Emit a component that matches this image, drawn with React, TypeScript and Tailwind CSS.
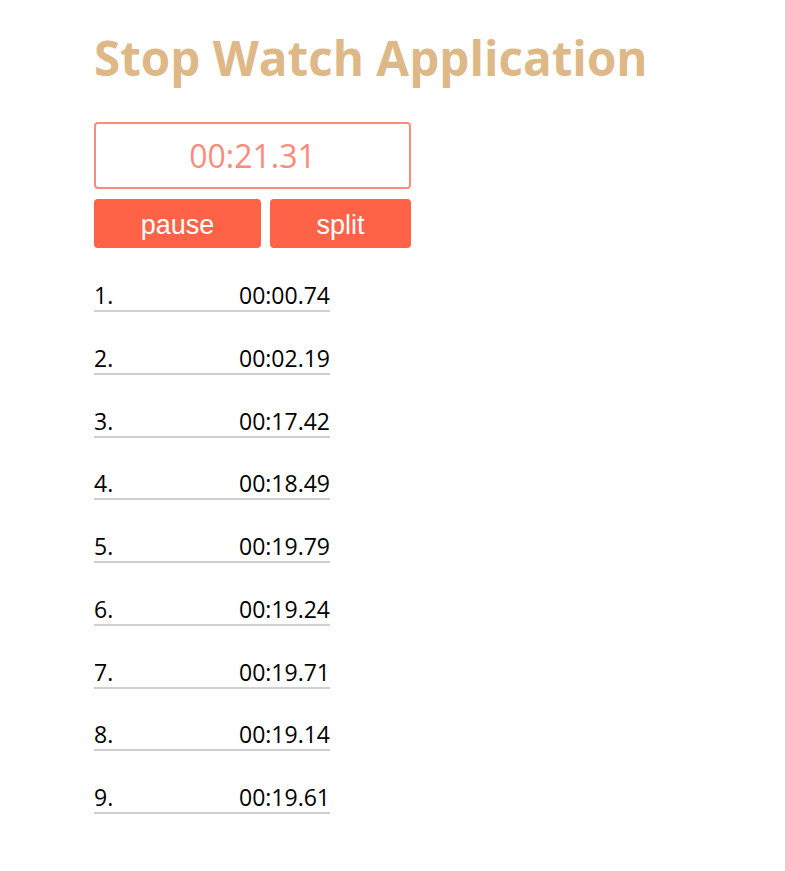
import React from "react";

const laps = ["00:00.74","00:02.19","00:17.42","00:18.49","00:19.79","00:19.24","00:19.71","00:19.14","00:19.61"];

export default function App() {
  return (
    <div className="min-h-screen bg-white pl-[94px] pt-[26px]" style={{ fontFamily: '"Open Sans", "Noto Sans", sans-serif' }}>
      <h1 className="text-[47.6px] font-bold leading-[64px] text-[#deb887]">Stop Watch Application</h1>
      <div className="mt-[32px] w-[317px]">
        <div className="flex h-[67px] items-center justify-center rounded-[4px] border-2 border-[#fa8c7c] text-[32px] text-[#fa8c7c]">
          00:21.31
        </div>
        <div className="mt-[10px] flex gap-[9px]" style={{ fontFamily: '"Liberation Sans", Arial, sans-serif' }}>
          <button className="h-[49px] w-[167px] rounded-[4px] bg-[#ff6347] pt-[3px] text-[27px] text-white">pause</button>
          <button className="h-[49px] flex-1 rounded-[4px] bg-[#ff6347] pt-[3px] text-[27px] text-white">split</button>
        </div>
      </div>
      <ul className="mt-[32px] w-[236px]">
        {laps.map((t, i) => (
          <li key={i} className="mb-[30.75px] flex h-[32px] items-end justify-between border-b-2 border-[#d0d0d0] text-[23px] leading-[30px] text-black">
            <span>{i + 1}.</span>
            <span>{t}</span>
          </li>
        ))}
      </ul>
    </div>
  );
}
